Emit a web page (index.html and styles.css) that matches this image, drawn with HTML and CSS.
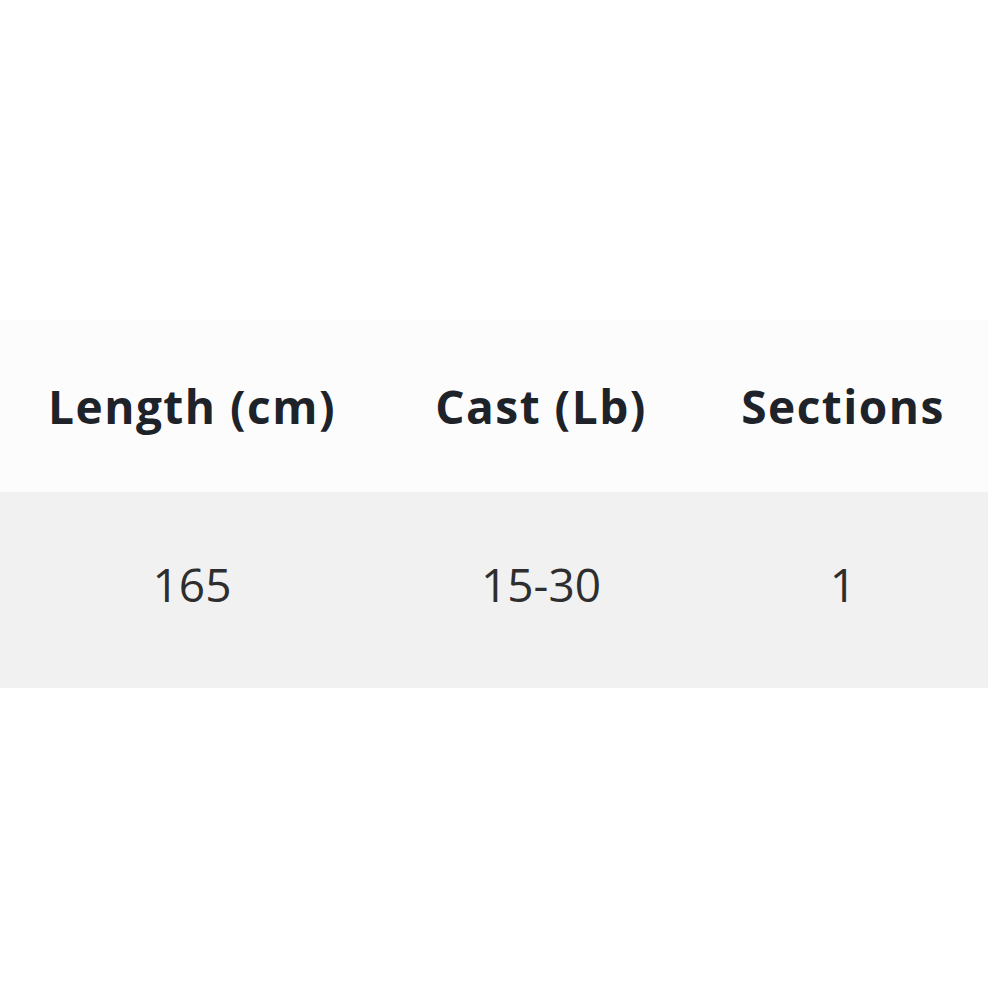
FILE: index.html
```html
<!DOCTYPE html>
<html>
<head>
<meta charset="utf-8">
<link rel="stylesheet" href="styles.css">
</head>
<body>
<div class="page">
  <table class="spec">
    <colgroup>
      <col class="c1"><col class="c2"><col class="c3">
    </colgroup>
    <thead>
      <tr><th>Length (cm)</th><th>Cast (Lb)</th><th>Sections</th></tr>
    </thead>
    <tbody>
      <tr><td>165</td><td>15-30</td><td>1</td></tr>
    </tbody>
  </table>
</div>
</body>
</html>
```
FILE: styles.css
```css
html, body {
  margin: 0;
  padding: 0;
  background: #ffffff;
}
.page {
  width: 1000px;
  height: 1000px;
  padding-top: 320px;
  box-sizing: border-box;
}
.spec {
  width: 988px;
  border-collapse: collapse;
  table-layout: fixed;
  font-family: "Open Sans", "Liberation Sans", sans-serif;
  font-size: 46px;
}
.c1 { width: 384px; }
.c2 { width: 314px; }
.c3 { width: 290px; }
.spec th {
  height: 172px;
  padding: 0;
  font-weight: 700;
  letter-spacing: 1.5px;
  color: #1e2229;
  background: #fcfcfc;
  text-align: center;
  vertical-align: middle;
}
.spec td {
  height: 184px;
  padding: 0 0 12px 0;
  font-weight: 400;
  color: #2e2e2e;
  background: #f1f1f1;
  text-align: center;
  vertical-align: middle;
}
```
